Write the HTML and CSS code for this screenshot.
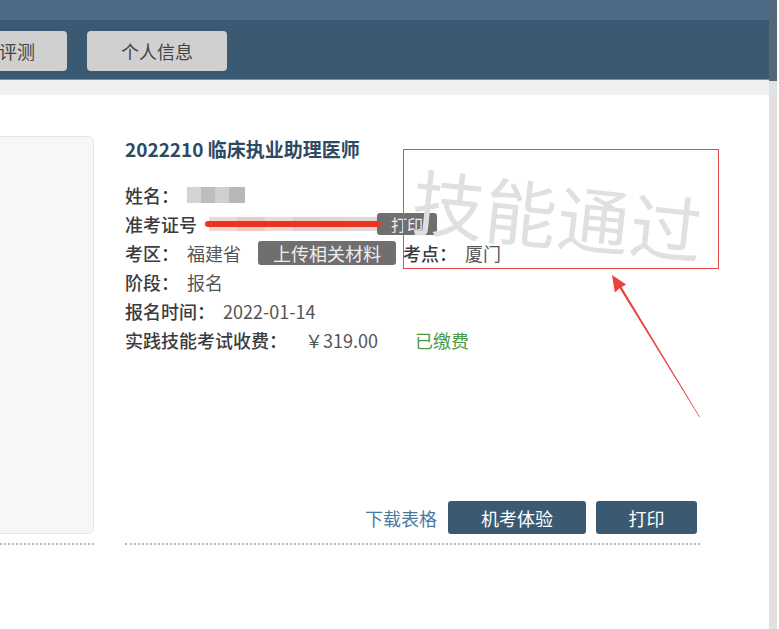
FILE: index.html
```html
<!DOCTYPE html>
<html lang="zh-CN">
<head>
    <meta charset="UTF-8">
    <meta name="viewport" content="width=device-width, initial-scale=1.0">
    <title>报名信息</title>

    <link rel="stylesheet" href="styles.css">

</head>
<body>
    <div class="page">
        <div class="main">
            <div class="top-strip"></div>
            <nav class="nav">
                <div class="tab tab-first">评测</div>
                <div class="tab">个人信息</div>
            </nav>
            <div class="sub-strip"></div>

            <div class="content">
                <div class="left-col">
                    <div class="photo-card"></div>
                </div>

                <div class="exam">
                    <h1 class="exam-title">2022210 临床执业助理医师</h1>

                    <div class="info">
                        <div class="row">
                            <span class="label">姓名：</span>
                            <span class="mosaic mosaic-name">
                                <i class="m1"></i><i class="m2"></i><i class="m3"></i><i class="m4"></i>
                            </span>
                        </div>
                        <div class="row">
                            <span class="label">准考证号</span>
                            <span class="mosaic mosaic-id">
                                <i class="p1"></i><i class="p2"></i><i class="p3"></i><i class="p4"></i><i class="p5"></i><i class="p6"></i>
                                <span class="redline"></span>
                            </span>
                            <span class="btn-gray btn-small">打印</span>
                        </div>
                        <div class="row">
                            <span class="label">考区：</span>
                            <span class="value">福建省</span>
                            <span class="btn-gray btn-upload">上传相关材料</span>
                            <span class="label label-point">考点：</span>
                            <span class="value">厦门</span>
                        </div>
                        <div class="row">
                            <span class="label">阶段：</span>
                            <span class="value">报名</span>
                        </div>
                        <div class="row">
                            <span class="label">报名时间：</span>
                            <span class="value">2022-01-14</span>
                        </div>
                        <div class="row">
                            <span class="label">实践技能考试收费：</span>
                            <span class="value fee">￥319.00</span>
                            <span class="paid">已缴费</span>
                        </div>
                    </div>

                    <div class="actions">
                        <a class="download" href="#">下载表格</a>
                        <span class="btn-blue btn-wide">机考体验</span>
                        <span class="btn-blue btn-narrow">打印</span>
                    </div>
                </div>

                <div class="stamp">技能通过</div>
                <div class="mark-box"></div>
                <svg class="mark-arrow" width="779" height="629" viewBox="0 0 779 629">
                    <polygon fill="#e8433f" points="700,418 621.6,287.9 626.2,285.6 612,276 614.8,293.4 619.6,289.2 699.4,418.3"/>
                </svg>
            </div>
        </div>
        <div class="scrollbar">
            <div class="scrollbar-top"></div>
        </div>
    </div>
</body>
</html>
```

FILE: styles.css
```css
body{
    margin:0;
    padding:0;
    background-color: white;
    font-family: "Noto Sans CJK SC", "Noto Sans", sans-serif;
    color: #444;
}

.page{
    display: flex;
    width: 777px;
    height: 629px;
    overflow: hidden;
}

.main{
    flex: 1;
    min-width: 0;
}

.top-strip{
    height: 20px;
    background-color: #4b6b88;
}

.nav{
    height: 60px;
    background-color: #3a5a73;
    border-bottom: 1px solid #7e909d;
    display: flex;
    gap: 20px;
    padding-top: 11px;
    box-sizing: border-box;
}

.tab{
    width: 140px;
    height: 40px;
    flex-shrink: 0;
    background-color: #d0d0d0;
    border-radius: 4px;
    display: flex;
    justify-content: center;
    align-items: center;
    font-size: 18px;
    color: #444;
}

.tab-first{
    margin-left: -73px;
    justify-content: flex-end;
    box-sizing: border-box;
    padding-right: 32px;
}

.sub-strip{
    height: 15px;
    background-color: #eef0f2;
}

.content{
    position: relative;
    display: flex;
    padding-top: 41px;
}

.left-col{
    width: 94px;
    padding-bottom: 9px;
    border-bottom: 2px dotted #b9b9b9;
}

.photo-card{
    height: 396px;
    margin-left: -8px;
    background-color: #f7f7f7;
    border: 1px solid #e6e6e6;
    border-radius: 6px;
}

.exam{
    width: 575px;
    margin-left: 31px;
    display: flex;
    flex-direction: column;
    padding-bottom: 9px;
    border-bottom: 2px dotted #b9b9b9;
}

.exam-title{
    margin: 0;
    font-size: 19px;
    line-height: 26px;
    font-weight: bold;
    color: #2e4a62;
}

.info{
    margin-top: 18px;
}

.row{
    display: flex;
    align-items: center;
    height: 29px;
    font-size: 18px;
}

.label{
    font-weight: 500;
    color: #3c3c3c;
    margin-right: 8px;
}

.value{
    color: #555;
}

.label-point{
    margin-left: 7px;
    margin-right: 8px;
}

.mosaic{
    display: flex;
    align-items: center;
}

.mosaic i{
    display: block;
    height: 16px;
}

.mosaic-name i{ width: 14px; }
.mosaic-name .m1{ background: #d4d4d4; }
.mosaic-name .m2{ background: #bdbdbd; }
.mosaic-name .m3{ background: #cfcfcf; }
.mosaic-name .m4{ background: #b8b8b8; width: 16px; }

.mosaic-id{
    position: relative;
    margin-left: 4px;
}

.mosaic-id i{ width: 28px; height: 14px; }
.mosaic-id .p1{ background: #f3d6d0; }
.mosaic-id .p2{ background: #eec7bf; }
.mosaic-id .p3{ background: #f0d9d4; }
.mosaic-id .p4{ background: #e3cfcb; }
.mosaic-id .p5{ background: #ebd1cc; }
.mosaic-id .p6{ background: #e2d6d4; }

.redline{
    position: absolute;
    left: -4px;
    right: -4px;
    top: 4px;
    height: 6px;
    background-color: #e8351f;
    border-radius: 4px;
}

.btn-gray{
    background-color: #6f6f6f;
    color: #eee;
    border-radius: 3px;
    display: flex;
    justify-content: center;
    align-items: center;
}

.btn-small{
    width: 60px;
    height: 22px;
    font-size: 16px;
}

.btn-upload{
    width: 138px;
    height: 24px;
    font-size: 18px;
    margin-left: 17px;
}

.fee{
    margin-left: 10px;
}

.paid{
    color: #4a9a48;
    margin-left: 37px;
}

.actions{
    margin-top: auto;
    display: flex;
    justify-content: flex-end;
    align-items: center;
    gap: 10px;
    padding-right: 3px;
    font-size: 18px;
}

.download{
    color: #4a78a3;
    text-decoration: none;
    margin-right: 1px;
}

.btn-blue{
    height: 33px;
    background-color: #3a5a73;
    color: white;
    border-radius: 3px;
    display: flex;
    justify-content: center;
    align-items: center;
}

.btn-wide{ width: 138px; }
.btn-narrow{ width: 101px; }

.stamp{
    position: absolute;
    left: 413px;
    top: 58px;
    font-size: 72px;
    line-height: 90px;
    color: #e0e0e0;
    letter-spacing: 1px;
    transform: rotate(6deg);
    transform-origin: left center;
    pointer-events: none;
}

.mark-box{
    position: absolute;
    left: 403px;
    top: 54px;
    width: 314px;
    height: 118px;
    border: 1.5px solid #e84a4a;
}

.mark-arrow{
    position: absolute;
    left: 0;
    top: -96px;
}

.scrollbar{
    width: 8px;
    background-color: #e1e1e1;
}

.scrollbar-top{
    height: 81px;
    background-color: #53697a;
}
```
